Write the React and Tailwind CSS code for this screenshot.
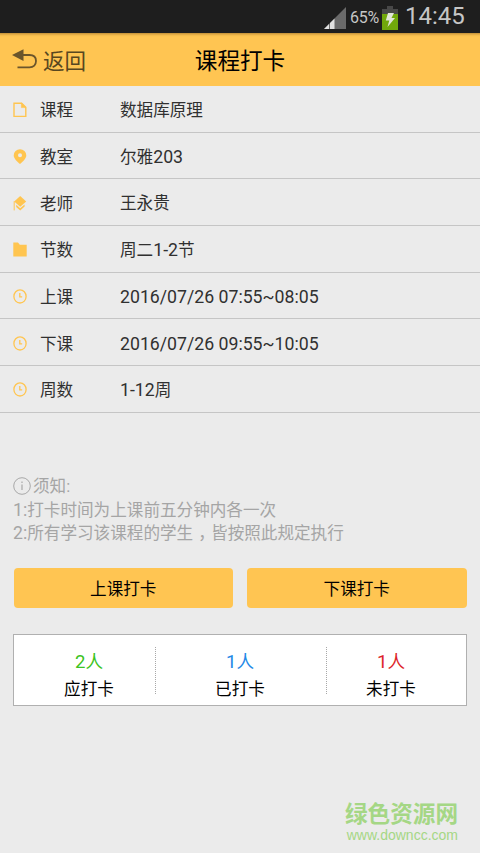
import React from "react";

const Amber = "#ffc550";

function DocIcon() {
  return (
    <svg width="14" height="16" viewBox="0 0 14 16" fill="none" stroke={Amber} strokeWidth="1.4">
      <path d="M1 1.2H8.6L12.8 5.4V14.4H1Z" />
      <path d="M8.4 1V5.6H13Z" fill={Amber} strokeWidth="0.6" />
    </svg>
  );
}

function PinIcon() {
  return (
    <svg width="14" height="16" viewBox="0 0 14 16">
      <path fillRule="evenodd" fill={Amber} d="M7 0.3a6.3 6.1 0 0 1 6.3 6.1c0 3.2-3.9 6.3-6.3 8.6C4.6 12.7 0.7 9.6 0.7 6.4A6.3 6.1 0 0 1 7 0.3ZM7 4.3a2 2 0 1 0 0 4a2 2 0 0 0 0-4Z" />
    </svg>
  );
}

function TeacherIcon() {
  return (
    <svg width="14" height="16" viewBox="0 0 14 16">
      <path d="M7.2 0L13.2 5.4L7.2 10.8L1.2 5.4Z" fill={Amber} />
      <path d="M1.2 5.2V14.4" stroke={Amber} strokeWidth="1" />
      <path d="M3.2 8.8L7.2 12.2L11.6 8.4V10.6L7.2 14.4L3.2 11Z" fill={Amber} />
    </svg>
  );
}

function FolderIcon() {
  return (
    <svg width="14" height="16" viewBox="0 0 14 16">
      <path d="M0.3 0.6H5L6.8 2.8H13.7V14.6H0.3Z" fill={Amber} />
    </svg>
  );
}

function ClockIcon() {
  return (
    <svg width="14" height="16" viewBox="0 0 14 16" fill="none" stroke={Amber} strokeWidth="1.3">
      <ellipse cx="7" cy="7.4" rx="6.1" ry="6.6" />
      <path d="M6.8 4V7.8H9.2" />
    </svg>
  );
}

// Digits and Latin signs are set slightly larger than the Chinese characters beside them.
function Mixed({ text }) {
  return text.split(/([ -~]+)/).map((part, i) =>
    i % 2 ? (
      <span key={i} className="text-[17.7px]">
        {part}
      </span>
    ) : (
      part
    )
  );
}

const rows = [
  { Icon: DocIcon, label: "课程", value: "数据库原理" },
  { Icon: PinIcon, label: "教室", value: "尔雅203" },
  { Icon: TeacherIcon, label: "老师", value: "王永贵" },
  { Icon: FolderIcon, label: "节数", value: "周二1-2节" },
  { Icon: ClockIcon, label: "上课", value: "2016/07/26 07:55~08:05" },
  { Icon: ClockIcon, label: "下课", value: "2016/07/26 09:55~10:05" },
  { Icon: ClockIcon, label: "周数", value: "1-12周" },
];

function StatusBar() {
  return (
    <div className="flex h-[33px] items-center justify-end bg-[#1e1e1e] pr-[15px] text-[#c6c6c6]">
      <svg className="mt-[3px]" width="22" height="22" viewBox="0 0 22 22">
        <path d="M0 22L22 0V22Z" fill="#6a6a6a" />
        <path d="M0 22L5 17V22ZM6 16L10.5 11.5V22H6Z" fill="#e0e0e0" />
      </svg>
      <span className="ml-[4px] mt-[2px] w-[29px] whitespace-nowrap text-[16px] tracking-[-0.3px]">65%</span>
      <svg className="ml-[3px] mt-[2px]" width="16" height="24" viewBox="0 0 16 24">
        <path d="M5 0H11V3H16V8H0V3H5Z" fill="#484848" />
        <path d="M0 8H16V24H0Z" fill="#71a80b" />
        <path d="M6 7H12L9.5 12H13L5.5 21L7.3 14.5H3.8Z" fill="#e1e5d9" />
      </svg>
      <span className="ml-[7px] w-[60px] whitespace-nowrap text-[24px] leading-[33px]">14:45</span>
    </div>
  );
}

function Header() {
  return (
    <header className="grid h-[53px] grid-cols-3 items-center bg-[#ffc552] pt-[4px] shadow-[inset_0_4px_3px_-3px_#b08030]">
      <div className="flex items-center pl-[12px] text-[21.5px] text-[#584720]">
        <svg className="-mt-[4px]" width="25" height="22" viewBox="0 0 25 22" fill="none">
          <path d="M0 6L11.5 0.3V12Z" fill="#6b552b" />
          <path d="M10 6H17.5C21.5 6 24 8.3 24 12S21.5 18.3 17.5 18.3H5.5" stroke="#6b552b" strokeWidth="1.8" />
        </svg>
        <span className="ml-[6px] leading-[30px]">返回</span>
      </div>
      <h1 className="text-center text-[22.6px] leading-[30px] text-black">课程打卡</h1>
    </header>
  );
}

function Count({ n, label, color, inset }) {
  return (
    <div className={`flex flex-col items-center pt-[11px] text-[16.6px] leading-[27px] ${inset}`}>
      <span className={`text-[17.6px] ${color}`}>
        <span className="text-[18.6px] leading-[20px]">{n}</span>人
      </span>
      <span className="text-black">{label}</span>
    </div>
  );
}

export default function App() {
  return (
    <div className="flex h-[853px] w-[480px] flex-col overflow-hidden bg-[#ebebeb] font-[Roboto,'Noto_Sans_CJK_SC',sans-serif] text-[16.6px] text-[#303030]">
      <StatusBar />
      <Header />
      <div>
        {rows.map(({ Icon, label, value }) => (
          <div key={label} className="flex h-[46.67px] items-center border-b border-[#c5c5c5] pl-[13px] pt-[3px]">
            <Icon />
            <span className="ml-[13px] w-[80px] pt-[2px] leading-[24px]">{label}</span>
            <span className="pt-px leading-[24px]">
              <Mixed text={value} />
            </span>
          </div>
        ))}
      </div>
      <div className="mt-[61px] pl-[13px] leading-[23.3px] text-[#a5a5a5]">
        <div className="flex h-[24px] items-center">
          <svg width="18" height="18" viewBox="0 0 18 18" fill="none" stroke="#a8a8a8">
            <circle cx="9" cy="9" r="8.3" />
            <path d="M9 7.5V13M9 4.5V6" strokeWidth="1.2" />
          </svg>
          <span className="ml-[2px] pt-[2px]">须知:</span>
        </div>
        <p className="pt-px">
          <Mixed text="1:打卡时间为上课前五分钟内各一次" />
        </p>
        <p>
          <Mixed text="2:所有学习该课程的学生" />
          <span className="ml-[5px] mr-[4.6px] [font-feature-settings:'halt']">，</span>
          皆按照此规定执行
        </p>
      </div>
      <div className="mx-[13.5px] mt-[23px] grid grid-cols-2 gap-[14px] text-black">
        <button className="h-[40px] rounded-[4px] bg-[#ffc552] pt-[4px]">上课打卡</button>
        <button className="h-[40px] rounded-[4px] bg-[#ffc552] pt-[4px]">下课打卡</button>
      </div>
      <div className="mx-[13px] mt-[26px] grid h-[72px] grid-cols-[141px_1px_170px_1px_1fr] items-center border border-[#b0b0b0] bg-white">
        <Count n={2} label="应打卡" color="text-[#3bc322]" inset="pl-[9px]" />
        <div className="h-[47px] border-l border-dotted border-[#a8a8a8]" />
        <Count n={1} label="已打卡" color="text-[#2288e6]" inset="pr-[2px]" />
        <div className="h-[47px] border-l border-dotted border-[#a8a8a8]" />
        <Count n={1} label="未打卡" color="text-[#dd1f2b]" inset="pr-[11px]" />
      </div>
      <div className="mr-[22px] mt-auto flex flex-col items-end pb-[10px] text-[#a5d785]">
        <div className="text-[22.6px] font-bold leading-[24px]">绿色资源网</div>
        <div className="font-['Liberation_Sans',sans-serif] text-[14px] leading-[16px]">www.downcc.com</div>
      </div>
    </div>
  );
}
